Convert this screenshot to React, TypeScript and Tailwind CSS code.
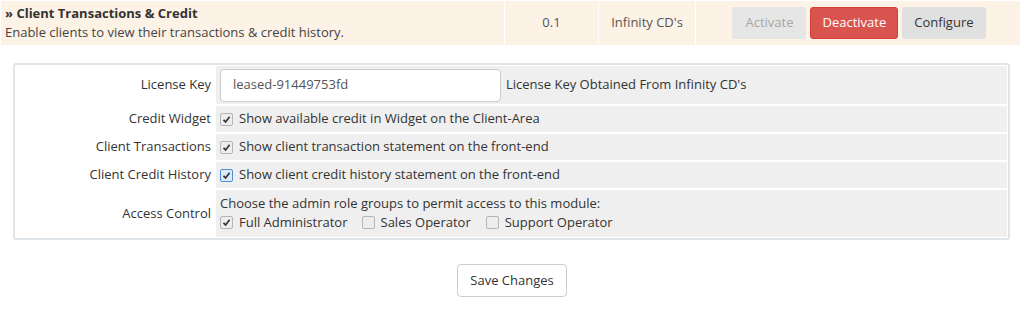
import React from 'react';

const font = { fontFamily: '"Open Sans", "Liberation Sans", sans-serif' };

const Check = ({ checked, focus }: { checked?: boolean; focus?: boolean }) => (
  <span
    className={`inline-flex items-center justify-center w-[13px] h-[13px] rounded-[2px] border ${
      focus ? 'border-[#4a90d9] bg-[#dfe9f5]' : 'border-[#b5b5b5] bg-[#ededed]'
    } mr-[6px] shrink-0`}
  >
    {checked && (
      <svg width="9" height="9" viewBox="0 0 9 9">
        <path d="M1.5 4.8 L3.6 7 L7.6 1.8" fill="none" stroke="#333" strokeWidth="1.7" />
      </svg>
    )}
  </span>
);

const SettingRow = ({ label, children, tall }: { label: string; children: React.ReactNode; tall?: boolean }) => (
  <tr>
    <td className={`w-[200px] bg-white text-right pr-[5px] text-[#333] align-middle ${tall ? 'h-[47px]' : 'h-[26px]'}`}>
      {label}
    </td>
    <td className="bg-[#efefef] pl-[4px] text-[#333] align-middle">{children}</td>
  </tr>
);

export default function App() {
  return (
    <div className="w-[1024px] h-[309px] bg-white text-[13px] overflow-hidden" style={font}>
      <table className="w-[1021px] border-collapse">
        <tbody>
          <tr className="bg-[#fdf2e6] h-[45px]">
            <td className="border border-white pl-[4px] w-[504px] align-middle leading-[19px]">
              <div className="font-bold text-[#333]">» Client Transactions &amp; Credit</div>
              <div className="text-[#444]">Enable clients to view their transactions &amp; credit history.</div>
            </td>
            <td className="border border-white w-[94px] text-center text-[#555]">0.1</td>
            <td className="border border-white w-[97px] text-center text-[#555]">Infinity CD's</td>
            <td className="border border-white text-center">
              <div className="flex justify-center gap-[4px] pl-[2px]">
                <button className="h-[32px] px-[13px] rounded-[3px] bg-[#e6e6e6] text-[#a6a6a6]">Activate</button>
                <button className="h-[32px] px-[11px] rounded-[3px] bg-[#d9534f] border border-[#d43f3a] text-white">Deactivate</button>
                <button className="h-[32px] px-[12px] rounded-[3px] bg-[#e0e0e0] text-[#333]">Configure</button>
              </div>
            </td>
          </tr>
        </tbody>
      </table>

      <div className="mt-[17px] ml-[13px] w-[997px] border-2 border-[#dfe5e8] rounded-[3px] p-px">
        <table className="w-full border-separate border-spacing-x-0 border-spacing-y-[2px] -my-[2px]">
          <tbody>
            <SettingRow label="License Key">
              <div className="flex items-center h-[38px]">
                <div className="w-[281px] h-[33px] bg-white border border-[#ccc] rounded-[4px] flex items-center pl-[12px] text-[#555]">
                  leased-91449753fd
                </div>
                <span className="ml-[5px]">License Key Obtained From Infinity CD's</span>
              </div>
            </SettingRow>
            <SettingRow label="Credit Widget">
              <span className="flex items-center"><Check checked />Show available credit in Widget on the Client-Area</span>
            </SettingRow>
            <SettingRow label="Client Transactions">
              <span className="flex items-center"><Check checked />Show client transaction statement on the front-end</span>
            </SettingRow>
            <SettingRow label="Client Credit History">
              <span className="flex items-center"><Check checked focus />Show client credit history statement on the front-end</span>
            </SettingRow>
            <SettingRow label="Access Control" tall>
              <div className="leading-[19px] -mt-[2px]">
                <div>Choose the admin role groups to permit access to this module:</div>
                <div className="flex items-center">
                  <Check checked />
                  <span className="mr-[14px]">Full Administrator</span>
                  <Check />
                  <span className="mr-[15px]">Sales Operator</span>
                  <Check />
                  <span>Support Operator</span>
                </div>
              </div>
            </SettingRow>
          </tbody>
        </table>
      </div>

      <div className="flex justify-center mt-[24px]">
        <button className="h-[33px] w-[110px] bg-white border border-[#ccc] rounded-[4px] text-[#333]">Save Changes</button>
      </div>
    </div>
  );
}
